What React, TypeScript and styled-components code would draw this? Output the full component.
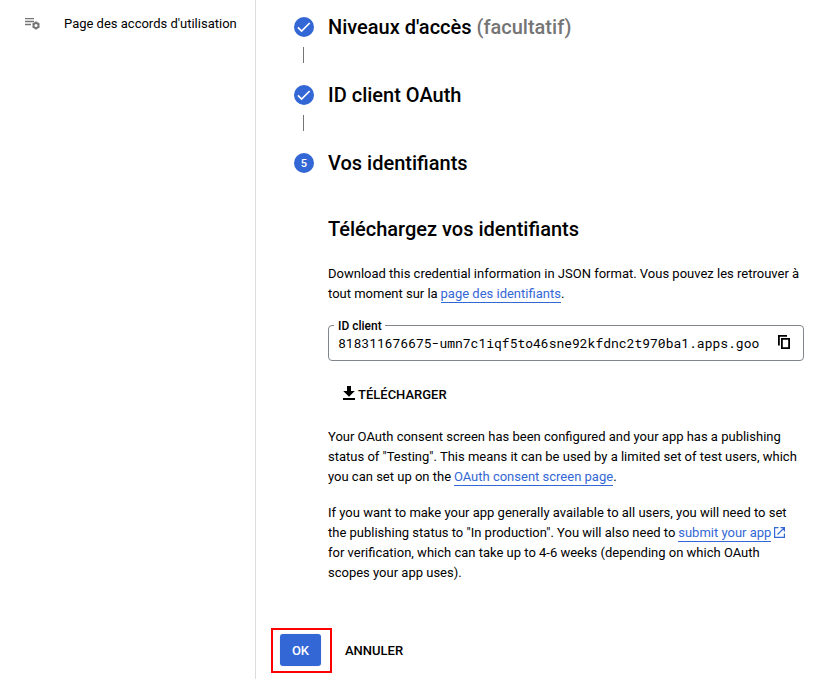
import React from "react";
import styled, { createGlobalStyle } from "styled-components";

const GlobalStyle = createGlobalStyle`
  * { box-sizing: border-box; }
  body {
    margin: 0;
    background: #fff;
    color: #000;
    font: 400 13px/20px Roboto, "Liberation Sans", sans-serif;
    overflow: hidden;
  }
`;

const Page = styled.div`
  display: grid;
  grid-template-columns: 256px 1fr;
  height: 679px;
  overflow: hidden;
`;

const Sidebar = styled.nav`
  border-right: 1px solid #dadce0;
  padding: 14px 0 0 24px;
`;

const NavItem = styled.a`
  display: flex;
  align-items: center;
  height: 20px;
  gap: 22px;
  white-space: nowrap;

  svg {
    margin-bottom: 2px;
  }
`;

const Main = styled.main`
  padding: 13px 12px 0 38px;
`;

const StepRow = styled.div`
  display: flex;
  align-items: center;
  gap: 14px;
  height: 28px;
`;

const StepBadge = styled.span`
  display: flex;
  align-items: center;
  justify-content: center;
  width: 20px;
  height: 20px;
  border-radius: 50%;
  background: #3367d6;
  color: #fff;
  font-size: 11px;
  font-weight: 500;
  line-height: 20px;
`;

const StepNumber = styled.span`
  padding-top: 1px;
`;

const StepTitle = styled.h2`
  margin: 0;
  font-size: 20px;
  line-height: 28px;
  font-weight: 500;
  white-space: nowrap;
`;

const Optional = styled.span`
  color: #757575;
`;

const Connector = styled.div`
  width: 1px;
  height: 16px;
  margin: 6px 0 18px 9px;
  background: #757575;
`;

const StepContent = styled.section`
  padding: 38px 0 0 34px;
`;

const Paragraph = styled.p<{ $top: number }>`
  margin: ${({ $top }) => $top}px 0 0;
  white-space: nowrap;
`;

const Link = styled.a`
  margin-left: -0.4px;
  padding-bottom: 1px;
  color: #3367d6;
  border-bottom: 1px solid #3367d6;
`;

const Field = styled.fieldset`
  display: flex;
  align-items: center;
  justify-content: space-between;
  margin: 15px 0 0;
  height: 42px;
  min-width: 0;
  padding: 0 12px 6px 5px;
  border: 1px solid #80868b;
  border-radius: 4px;

  svg {
    margin-bottom: 1px;
  }
`;

const FieldLabel = styled.legend`
  padding: 2px 3px 0 4px;
  font-size: 12px;
  line-height: 10px;
  font-weight: 500;
`;

const FieldValue = styled.span`
  padding-left: 4px;
  font: 400 13px/20px "Roboto Mono", "DejaVu Sans Mono", monospace;
  white-space: nowrap;
`;

const DownloadButton = styled.button`
  display: flex;
  align-items: center;
  gap: 3px;
  height: 20px;
  margin: 24px 0 0 15px;
  padding: 0;
  border: 0;
  background: none;
  color: #000;
  font: 500 13px/20px Roboto, sans-serif;

  svg {
    margin-bottom: 4px;
  }
`;

const Actions = styled.div`
  display: flex;
  align-items: center;
  gap: 13px;
  margin: 45px 0 0 -23px;
`;

const Highlight = styled.div`
  padding: 4px 9px 5px 7px;
  border: 2px solid #f00;
`;

const PrimaryButton = styled.button`
  display: block;
  width: 41px;
  height: 32px;
  padding: 1px 0 0;
  border: 0;
  border-radius: 3px;
  background: #3367d6;
  color: #fff;
  font: 500 13px/32px Roboto, sans-serif;
  box-shadow: 0 0 2px rgba(0, 0, 0, 0.12);
`;

const TextButton = styled.button`
  padding: 0;
  border: 0;
  background: none;
  color: #000;
  font: 500 13px/20px Roboto, sans-serif;
`;

const ExternalSvg = styled.svg`
  margin-left: 3px;
  vertical-align: -1px;
`;

const AgreementIcon = () => (
  <svg width="18" height="18" viewBox="0 0 18 18" fill="none" stroke="#757575">
    <path d="M1 4.6h9M1 7.5h9M1 10.5h6" strokeWidth="1.3" />
    <circle cx="12" cy="11.5" r="2.5" strokeWidth="1.9" />
    <path
      d="M12 7.6v1.5M12 13.9v1.5M8.6 9.5l1.3.8M14.1 12.7l1.3.8M8.6 13.5l1.3-.8M14.1 10.3l1.3-.8"
      strokeWidth="1.7"
    />
  </svg>
);

const CheckIcon = () => (
  <svg width="20" height="20" viewBox="0 0 20 20" fill="none">
    <path d="M3.9 10.4l3.7 3.7L15.7 6" stroke="#fff" strokeWidth="1.7" />
  </svg>
);

const CopyIcon = () => (
  <svg width="14" height="16" viewBox="0 0 14 16" fill="none" stroke="#000">
    <path d="M1.9 11.6V1.9H10" strokeWidth="1.8" />
    <path d="M4.9 4.9h7.2v9.2H4.9z" strokeWidth="1.8" />
  </svg>
);

const DownloadIcon = () => (
  <svg width="12" height="14" viewBox="0 0 12 14">
    <path d="M4 0h4v5h3.8L6 10.8.2 5H4zM0 12h12v2H0z" />
  </svg>
);

const ExternalIcon = () => (
  <ExternalSvg width="11" height="11" viewBox="0 0 11 11" fill="none" stroke="#3367d6">
    <path d="M4.5.6H.6v9.8h9.8V6.5M6.5.6h3.9v3.9M10.2.8L3.5 7.5" strokeWidth="1.2" />
  </ExternalSvg>
);

export default function App() {
  return (
    <Page>
      <GlobalStyle />
      <Sidebar>
        <NavItem>
          <AgreementIcon />
          Page des accords d'utilisation
        </NavItem>
      </Sidebar>
      <Main>
        <StepRow>
          <StepBadge><CheckIcon /></StepBadge>
          <StepTitle>Niveaux d'accès <Optional>(facultatif)</Optional></StepTitle>
        </StepRow>
        <Connector />
        <StepRow>
          <StepBadge><CheckIcon /></StepBadge>
          <StepTitle>ID client OAuth</StepTitle>
        </StepRow>
        <Connector />
        <StepRow>
          <StepBadge><StepNumber>5</StepNumber></StepBadge>
          <StepTitle>Vos identifiants</StepTitle>
        </StepRow>
        <StepContent>
          <StepTitle>Téléchargez vos identifiants</StepTitle>
          <Paragraph $top={21}>
            Download this credential information in JSON format. Vous pouvez les retrouver à<br />
            tout moment sur la <Link>page des identifiants</Link>.
          </Paragraph>
          <Field>
            <FieldLabel>ID client</FieldLabel>
            <FieldValue>818311676675-umn7c1iqf5to46sne92kfdnc2t970ba1.apps.goo</FieldValue>
            <CopyIcon />
          </Field>
          <DownloadButton><DownloadIcon />TÉLÉCHARGER</DownloadButton>
          <Paragraph $top={22}>
            Your OAuth consent screen has been configured and your app has a publishing<br />
            status of "Testing". This means it can be used by a limited set of test users, which<br />
            you can set up on the <Link>OAuth consent screen page</Link>.
          </Paragraph>
          <Paragraph $top={16}>
            If you want to make your app generally available to all users, you will need to set<br />
            the publishing status to "In production". You will also need to <Link>submit your app</Link>
            <ExternalIcon /><br />
            for verification, which can take up to 4-6 weeks (depending on which OAuth<br />
            scopes your app uses).
          </Paragraph>
        </StepContent>
        <Actions>
          <Highlight><PrimaryButton>OK</PrimaryButton></Highlight>
          <TextButton>ANNULER</TextButton>
        </Actions>
      </Main>
    </Page>
  );
}
